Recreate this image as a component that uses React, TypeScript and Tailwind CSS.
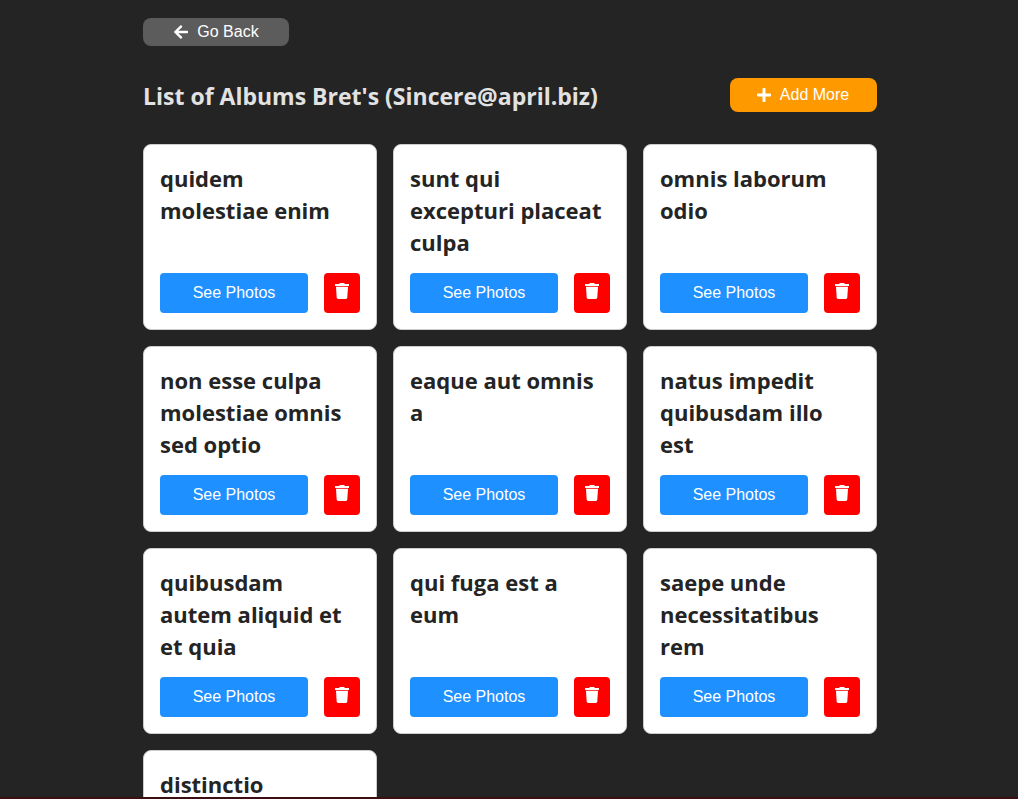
import { FaArrowLeft, FaPlus } from "react-icons/fa";

const albums = [
  "quidem molestiae enim",
  "sunt qui excepturi placeat culpa",
  "omnis laborum odio",
  "non esse culpa molestiae omnis sed optio",
  "eaque aut omnis a",
  "natus impedit quibusdam illo est",
  "quibusdam autem aliquid et et quia",
  "qui fuga est a eum",
  "saepe unde necessitatibus rem",
  "distinctio",
];

function TrashIcon() {
  return (
    <svg viewBox="0 0 16 18" className="h-[18px] w-4" fill="currentColor" aria-hidden="true">
      <path d="M1 2h4l1-.9h4l1 .9h4v2H1z" />
      <path d="M2 4.800h12l-.7 10.800q-.1 1.400-1.500 1.400H4.200q-1.400 0-1.500-1.400z" />
    </svg>
  );
}

function AlbumCard({ title }: { title: string }) {
  return (
    <article className="rounded-lg border border-[#ccc] bg-white px-4 pt-[17px] pb-4 text-[#242424]">
      <h2 className="mb-[15px] h-24 pr-1 font-['Open_Sans','Noto_Sans',sans-serif] text-[22px] leading-8 font-bold">
        {title}
      </h2>
      <div className="flex gap-4">
        <button className="h-10 flex-1 rounded bg-[#1e90ff] text-base text-white">See Photos</button>
        <button
          aria-label={`Delete ${title}`}
          className="flex h-10 w-9 justify-center rounded bg-[#f00] pt-[9px] text-white"
        >
          <TrashIcon />
        </button>
      </div>
    </article>
  );
}

export default function App() {
  return (
    <div className="h-screen overflow-hidden border-b-2 border-[#3c1013] bg-[#242424] font-['Liberation_Sans',Arial,sans-serif]">
      <main className="mx-auto max-w-[768px] pt-[18px] pr-4 pl-[18px]">
        <button className="flex h-7 w-[146px] items-center justify-center gap-2 rounded-lg bg-[#5c5c5c] text-base text-white">
          <FaArrowLeft aria-hidden="true" />
          Go Back
        </button>
        <header className="my-8 flex items-center justify-between">
          <h1 className="pt-0.5 font-['Open_Sans','Noto_Sans',sans-serif] text-[23px] leading-8 font-bold text-[#e2e2e2]">
            List of Albums Bret's (Sincere@april.biz)
          </h1>
          <button className="flex h-[34px] w-[147px] items-center justify-center gap-2 rounded-lg bg-[#ff9900] pr-0.5 text-base text-white">
            <FaPlus aria-hidden="true" />
            Add More
          </button>
        </header>
        <section className="grid grid-cols-2 gap-4 sm:grid-cols-3">
          {albums.map((title) => (
            <AlbumCard key={title} title={title} />
          ))}
        </section>
      </main>
    </div>
  );
}
